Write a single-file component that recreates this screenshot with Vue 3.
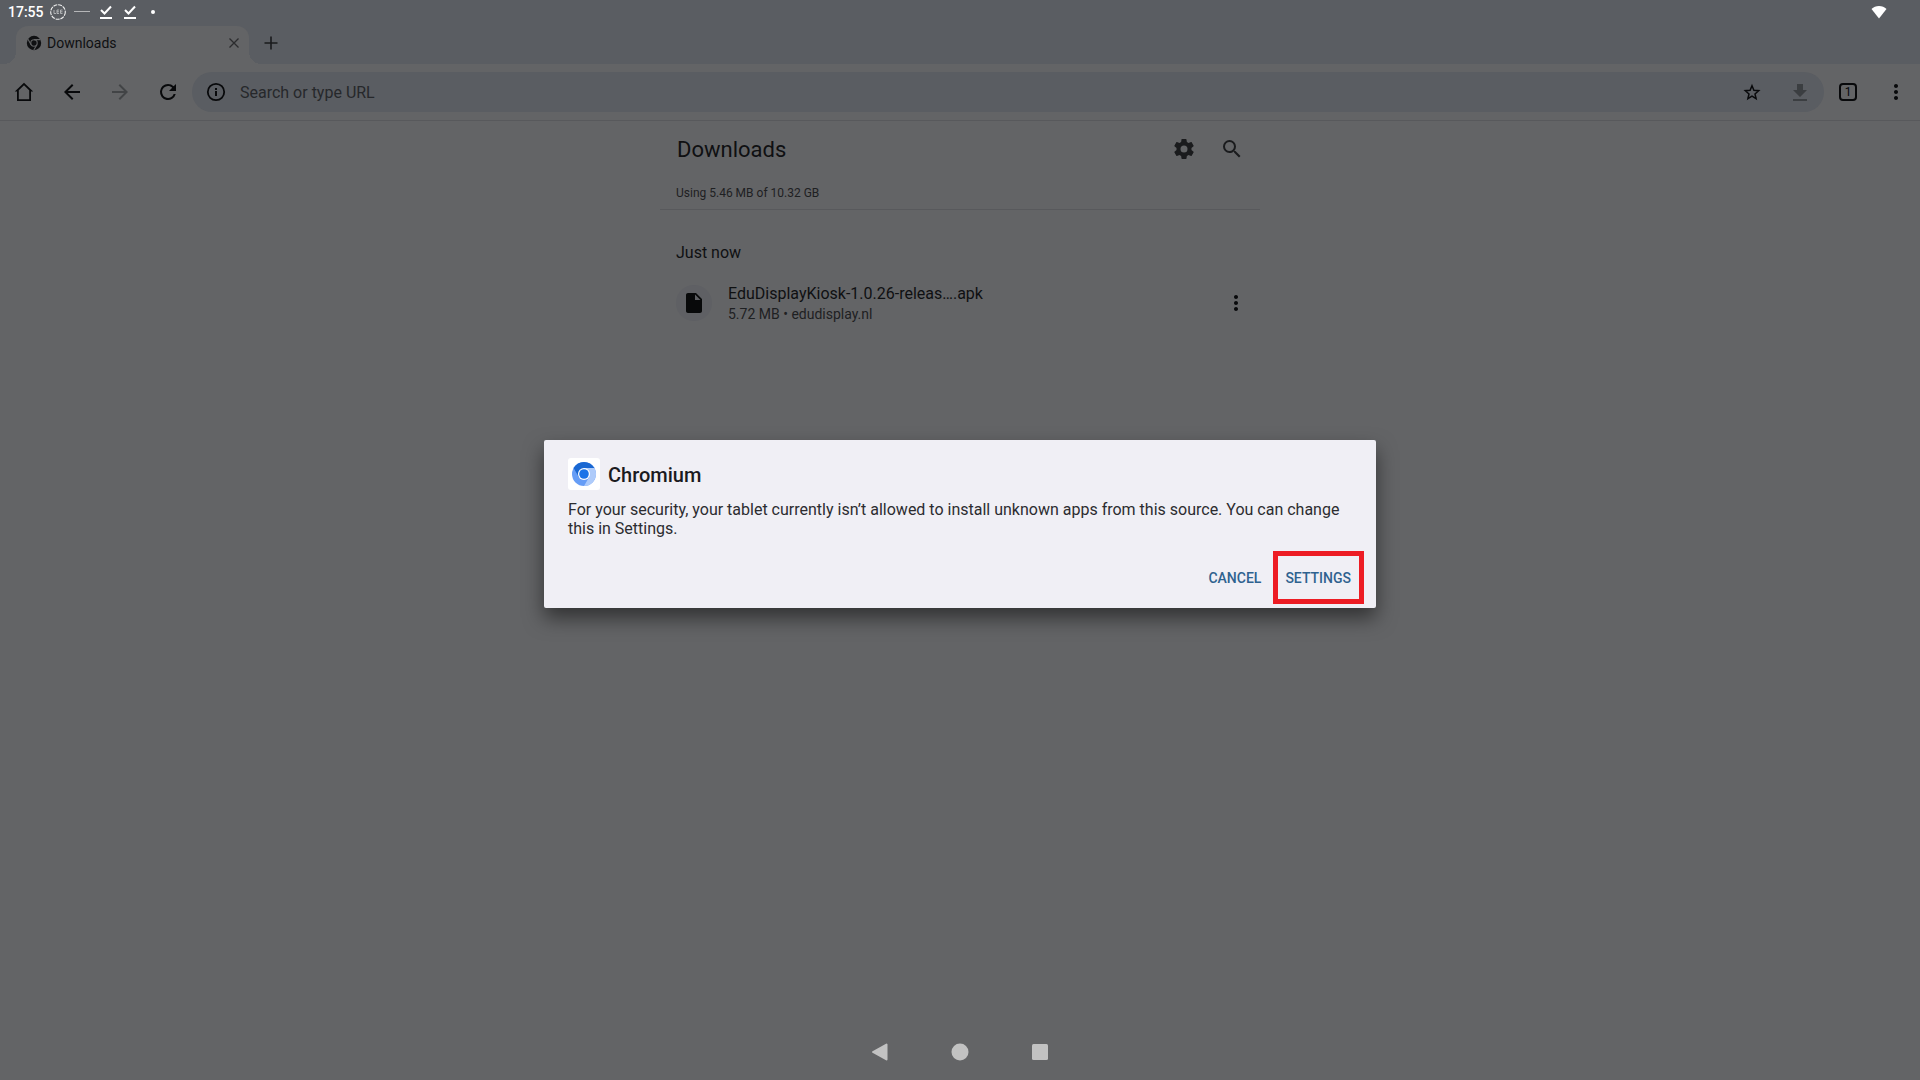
<template>
  <div class="screen">
    <header class="status-bar">
      <span class="clock">17:55</span>
      <svg class="status-glyph" viewBox="0 0 16 16">
        <circle cx="8" cy="8" r="7.300" fill="none" stroke="#f0f0f0" stroke-width="1.100" stroke-dasharray="4 0.900" />
        <path d="M4 6v3.500h2M9 6H7v3.500h2M7 7.800h2M12.500 6h-2v3.500h2M10.500 7.800h2" fill="none" stroke="#c4c5c6" stroke-width="0.8" />
      </svg>
      <svg class="status-glyph" viewBox="0 0 16 16"><path d="M0 7.500h16" stroke="#b5b6b8" /></svg>
      <svg v-for="n in 2" :key="n" class="status-glyph" viewBox="0 0 16 16">
        <path d="M3 6l3.500 3.500L13 2.500" fill="none" stroke="#fff" stroke-width="2" />
        <path d="M2 14h12" stroke="#fff" stroke-width="2" />
      </svg>
      <span class="more-dot"></span>
      <svg class="wifi" viewBox="0 0 16 14"><path d="M8 13.500L0.500 4Q3.500 1 8 1t7.500 3z" fill="#fff" /></svg>
    </header>

    <nav class="tab-strip" aria-label="Tabs">
      <div class="tab">
        <svg class="favicon" viewBox="0 0 16 16">
          <circle cx="8" cy="8" r="7.200" fill="#0f1012" />
          <circle cx="8" cy="8" r="3.200" fill="none" stroke="#626365" stroke-width="1.100" />
          <path d="M8 4.600h6.300M5.100 9.700L2 4.300M10.900 9.700L7.800 15" stroke="#626365" stroke-width="1.100" />
        </svg>
        <span class="tab-title">Downloads</span>
        <button class="tab-close" aria-label="Close tab">
          <svg viewBox="0 0 12 12"><path d="M1.500 1.500l9 9M10.500 1.500l-9 9" stroke="#2b2c2e" stroke-width="1.300" /></svg>
        </button>
      </div>
      <button class="new-tab" aria-label="New tab">
        <svg viewBox="0 0 14 14"><path d="M7 .5v13M.5 7h13" stroke="#1a1b1d" stroke-width="1.600" /></svg>
      </button>
    </nav>

    <div class="toolbar">
      <button v-for="item in navButtons" :key="item.label" class="icon-button" :class="{ disabled: item.disabled }" :disabled="item.disabled" :aria-label="item.label">
        <svg viewBox="0 0 24 24"><path :d="item.path" fill="currentColor" /></svg>
      </button>
      <div class="omnibox">
        <button class="icon-button" aria-label="Page info">
          <svg viewBox="0 0 24 24">
            <circle cx="12" cy="12" r="8.200" fill="none" stroke="currentColor" stroke-width="1.800" />
            <path d="M12 11v5M12 8v2" stroke="currentColor" stroke-width="2" />
          </svg>
        </button>
        <input v-model="url" type="text" placeholder="Search or type URL" aria-label="Search or type URL">
        <button class="icon-button" aria-label="Bookmark">
          <svg viewBox="0 0 24 24"><path d="M12 5.800l1.900 4.500 4.800.4-3.700 3.200 1.100 4.800-4.100-2.500-4.100 2.500L9 13.900l-3.700-3.200 4.800-.4z" fill="none" stroke="currentColor" stroke-width="1.500" /></svg>
        </button>
        <button class="icon-button disabled download" aria-label="Download page" disabled>
          <svg viewBox="0 0 24 24"><path d="M19 10h-4V4H9v6H5l7 7 7-7zM5 19v2h14v-2H5z" fill="currentColor" /></svg>
        </button>
      </div>
      <button class="icon-button" aria-label="Open tabs"><span class="tab-count">1</span></button>
      <button class="icon-button" aria-label="Menu">
        <svg viewBox="0 0 24 24"><path :d="dots" fill="currentColor" /></svg>
      </button>
    </div>

    <main class="content">
      <section class="downloads">
        <div class="downloads-header">
          <h1>Downloads</h1>
          <button class="icon-button soft" aria-label="Settings">
            <svg viewBox="0 0 24 24"><path :d="gear" fill="currentColor" /></svg>
          </button>
          <button class="icon-button soft" aria-label="Search downloads">
            <svg viewBox="0 0 24 24"><path :d="magnifier" fill="currentColor" /></svg>
          </button>
        </div>
        <p class="storage">Using 5.46 MB of 10.32 GB</p>
        <h2>Just now</h2>
        <div class="file-row">
          <span class="file-icon">
            <svg viewBox="0 0 24 24"><path d="M6 2c-1.100 0-2 .9-2 2v16c0 1.100.9 2 2 2h12c1.100 0 2-.9 2-2V8l-6-6H6zm7 7V3.500L18.500 9H13z" fill="#08090a" /></svg>
          </span>
          <div class="file-info">
            <span class="file-name">EduDisplayKiosk-1.0.26-releas….apk</span>
            <span class="file-meta">5.72 MB • edudisplay.nl</span>
          </div>
          <button class="icon-button" aria-label="More options">
            <svg viewBox="0 0 24 24"><path :d="dots" fill="currentColor" /></svg>
          </button>
        </div>
      </section>
    </main>

    <footer class="system-nav">
      <button aria-label="Back"><svg viewBox="0 0 20 20"><path d="M16.500 2.500v15L3 10z" fill="#c2c2c2" stroke="#c2c2c2" stroke-width="2" stroke-linejoin="round" /></svg></button>
      <button aria-label="Home"><svg viewBox="0 0 20 20"><circle cx="10" cy="10" r="8.500" fill="#c2c2c2" /></svg></button>
      <button aria-label="Recent apps"><svg viewBox="0 0 20 20"><rect x="2" y="2" width="16" height="16" rx="1.500" fill="#c2c2c2" /></svg></button>
    </footer>

    <div v-if="dialogOpen" class="dialog-layer">
      <div class="dialog" role="dialog" aria-labelledby="dialog-title">
        <div class="dialog-title">
          <svg viewBox="0 0 32 32">
            <rect width="32" height="32" rx="3" fill="#fff" />
            <circle cx="16" cy="16" r="12" fill="#669df6" />
            <path d="M16 10h10.400A12 12 0 0 1 16 28l5.200-9z" fill="#aecbfa" />
            <path d="M5.600 10A12 12 0 0 1 26.400 10H16l-5.200 9z" fill="#1967d2" />
            <circle cx="16" cy="16" r="6" fill="#fff" />
            <circle cx="16" cy="16" r="4.800" fill="#1a73e8" />
          </svg>
          <h2 id="dialog-title">Chromium</h2>
        </div>
        <p>For your security, your tablet currently isn’t allowed to install unknown apps from this source. You can change this in Settings.</p>
        <div class="dialog-actions">
          <button @click="dialogOpen = false">CANCEL</button>
          <button class="highlighted">SETTINGS</button>
        </div>
      </div>
    </div>
  </div>
</template>

<script setup>
import { ref } from 'vue'

const url = ref('')
const dialogOpen = ref(true)

const navButtons = [
  { label: 'Home', path: 'M12 2.800L2.800 11.500H5V21h14v-9.500h2.200L12 2.800zm0 2.500l5.200 5V19.200H6.800v-8.900l5.200-5z' },
  { label: 'Back', path: 'M20 11H7.830l5.590-5.590L12 4l-8 8 8 8 1.410-1.410L7.830 13H20v-2z' },
  { label: 'Forward', path: 'M12 4l-1.410 1.410L16.170 11H4v2h12.170l-5.580 5.590L12 20l8-8-8-8z', disabled: true },
  { label: 'Reload', path: 'M17.650 6.350A7.960 7.960 0 0 0 12 4a8 8 0 1 0 7.730 10h-2.080A6 6 0 1 1 12 6c1.660 0 3.140.69 4.220 1.780L13 11h7V4l-2.350 2.350z' },
]

const dots = 'M12 8c1.100 0 2-.9 2-2s-.9-2-2-2-2 .9-2 2 .9 2 2 2zm0 2c-1.100 0-2 .9-2 2s.9 2 2 2 2-.9 2-2-.9-2-2-2zm0 6c-1.100 0-2 .9-2 2s.9 2 2 2 2-.9 2-2-.9-2-2-2z'
const gear = 'M19.430 12.980c.04-.32.07-.64.07-.98s-.03-.66-.07-.98l2.110-1.650c.19-.15.24-.42.12-.64l-2-3.460c-.12-.22-.39-.3-.61-.22l-2.490 1c-.52-.4-1.080-.73-1.690-.98l-.38-2.650A.49.49 0 0 0 14 2h-4c-.25 0-.46.18-.49.42l-.38 2.650c-.61.25-1.170.59-1.690.98l-2.490-1c-.23-.09-.49 0-.61.22l-2 3.460c-.13.22-.07.49.12.64l2.110 1.650c-.04.32-.07.65-.07.98s.03.66.07.98l-2.110 1.650c-.19.15-.24.42-.12.64l2 3.460c.12.22.39.3.61.22l2.490-1c.52.4 1.080.73 1.690.98l.38 2.650c.03.24.24.42.49.42h4c.25 0 .46-.18.49-.42l.38-2.650c.61-.25 1.170-.59 1.690-.98l2.490 1c.23.09.49 0 .61-.22l2-3.460c.12-.22.07-.49-.12-.64l-2.110-1.650zM12 15.500a3.500 3.500 0 1 1 0-7 3.500 3.500 0 0 1 0 7z'
const magnifier = 'M15.500 14h-.79l-.28-.27A6.470 6.470 0 0 0 16 9.500 6.500 6.500 0 1 0 9.500 16c1.610 0 3.090-.59 4.230-1.570l.27.28v.79l5 4.990L20.490 19l-4.990-5zm-6 0a4.500 4.500 0 1 1 0-9 4.500 4.500 0 0 1 0 9z'
</script>

<style>
body {
  margin: 0;
}
</style>

<style scoped>
* {
  box-sizing: border-box;
}

.screen {
  position: relative;
  display: flex;
  flex-direction: column;
  min-height: 100vh;
  background: #636466;
  color: #0f1012;
  font-family: Roboto, sans-serif;
}

h1,
h2,
p {
  margin: 0;
  font-weight: 400;
}

button {
  display: flex;
  align-items: center;
  justify-content: center;
  padding: 0;
  border: 0;
  background: none;
  color: inherit;
  font: inherit;
}

svg {
  display: block;
  flex: none;
}

.status-bar {
  display: flex;
  align-items: center;
  gap: 8px;
  height: 24px;
  padding: 0 33px 0 8px;
  background: #5a5d62;
}

.clock {
  margin-right: -2px;
  color: #fff;
  font-size: 14px;
  font-weight: 500;
}

.status-glyph {
  width: 16px;
  height: 16px;
}

.more-dot {
  width: 4px;
  height: 4px;
  margin-left: 5px;
  border-radius: 50%;
  background: #fff;
}

.wifi {
  width: 16px;
  height: 14px;
  margin-left: auto;
}

.tab-strip {
  display: flex;
  height: 40px;
  padding: 2px 16px 0;
  background: #5a5d62;
}

.tab {
  position: relative;
  display: flex;
  align-items: center;
  width: 233px;
  padding: 0 8px 4px 10px;
  border-radius: 12px 12px 0 0;
  background: #636466;
}

/* flared bottom corners */
.tab::before,
.tab::after {
  content: '';
  position: absolute;
  bottom: 0;
  width: 12px;
  height: 12px;
}

.tab::before {
  right: 100%;
  background: radial-gradient(circle at 0 0, #5a5d62 12px, #636466 12px);
}

.tab::after {
  left: 100%;
  background: radial-gradient(circle at 100% 0, #5a5d62 12px, #636466 12px);
}

.favicon {
  width: 16px;
  height: 16px;
}

.tab-title {
  flex: 1;
  margin-left: 5px;
  font-size: 14px;
}

.tab-close {
  width: 14px;
  height: 24px;
}

.tab-close svg {
  width: 12px;
}

.new-tab {
  width: 28px;
  height: 34px;
  margin-left: 8px;
}

.new-tab svg {
  width: 14px;
}

.toolbar {
  display: flex;
  align-items: center;
  height: 57px;
  border-bottom: 1px solid #58595c;
}

.icon-button {
  flex: none;
  width: 48px;
  height: 40px;
  color: #08090b;
}

.icon-button svg {
  width: 24px;
  height: 24px;
}

.icon-button.disabled {
  color: #424446;
}

.icon-button.download {
  color: #3b3e41;
}

.icon-button.soft {
  color: #1a1b1d;
}

.omnibox {
  display: flex;
  flex: 1;
  height: 40px;
  border-radius: 20px;
  background: #5a5d62;
}

.omnibox input {
  flex: 1;
  min-width: 0;
  padding: 0;
  border: 0;
  outline: 0;
  background: none;
  color: #1e2022;
  font: 16px Roboto, sans-serif;
}

.omnibox input::placeholder {
  color: #26282b;
  opacity: 1;
}

.tab-count {
  width: 18px;
  height: 18px;
  border: 2px solid #08090b;
  border-radius: 4px;
  font-size: 12px;
  line-height: 15px;
  text-align: center;
}

.content {
  flex: 1;
}

.downloads {
  max-width: 600px;
  margin: 0 auto;
}

.downloads-header {
  display: flex;
  align-items: center;
  height: 56px;
  padding: 0 4px 0 17px;
}

.downloads-header h1 {
  flex: 1;
  font-size: 22px;
}

.storage {
  height: 33px;
  padding: 8px 16px;
  border-bottom: 1px solid #58595c;
  color: #1e2022;
  font-size: 12px;
  line-height: 16px;
}

.downloads h2 {
  padding: 33px 16px 20px;
  font-size: 16px;
  line-height: 20px;
}

.file-row {
  display: flex;
  align-items: center;
  gap: 16px;
  height: 40px;
  padding-left: 16px;
}

.file-icon {
  display: grid;
  place-items: center;
  width: 36px;
  height: 36px;
  border-radius: 50%;
  background: #5f6064;
}

.file-icon svg {
  width: 24px;
  height: 24px;
}

.file-info {
  display: flex;
  flex: 1;
  flex-direction: column;
  padding-top: 2px;
}

.file-name {
  font-size: 16px;
  line-height: 20px;
}

.file-meta {
  color: #1e2022;
  font-size: 14px;
  line-height: 20px;
}

.system-nav {
  display: flex;
  align-items: center;
  justify-content: center;
  height: 56px;
}

.system-nav button {
  width: 80px;
  height: 56px;
}

.system-nav svg {
  width: 20px;
}

.dialog-layer {
  position: absolute;
  inset: 24px 0 56px;
  display: flex;
  align-items: center;
  justify-content: center;
}

.dialog {
  width: 832px;
  max-width: 90%;
  padding: 18px 12px 4px 24px;
  border-radius: 2px;
  background: #f0eff5;
  box-shadow: 0 10px 20px rgba(0, 0, 0, 0.5);
  color: #1b1b1f;
}

.dialog-title {
  display: flex;
  align-items: center;
  gap: 8px;
}

.dialog-title svg {
  width: 32px;
  height: 32px;
}

.dialog-title h2 {
  padding-top: 2px;
  font-size: 20px;
  font-weight: 500;
}

.dialog p {
  margin-top: 10px;
  padding-right: 12px;
  color: #2c2c30;
  font-size: 16px;
  line-height: 19px;
}

.dialog-actions {
  display: flex;
  justify-content: flex-end;
  margin-top: 13px;
}

.dialog-actions button {
  height: 53px;
  padding: 0 12px;
  color: #2f628f;
  font-size: 14px;
  font-weight: 500;
}

.dialog-actions .highlighted {
  padding: 0 8px 0 7px;
  border: 5px solid #ed1c24;
}
</style>
